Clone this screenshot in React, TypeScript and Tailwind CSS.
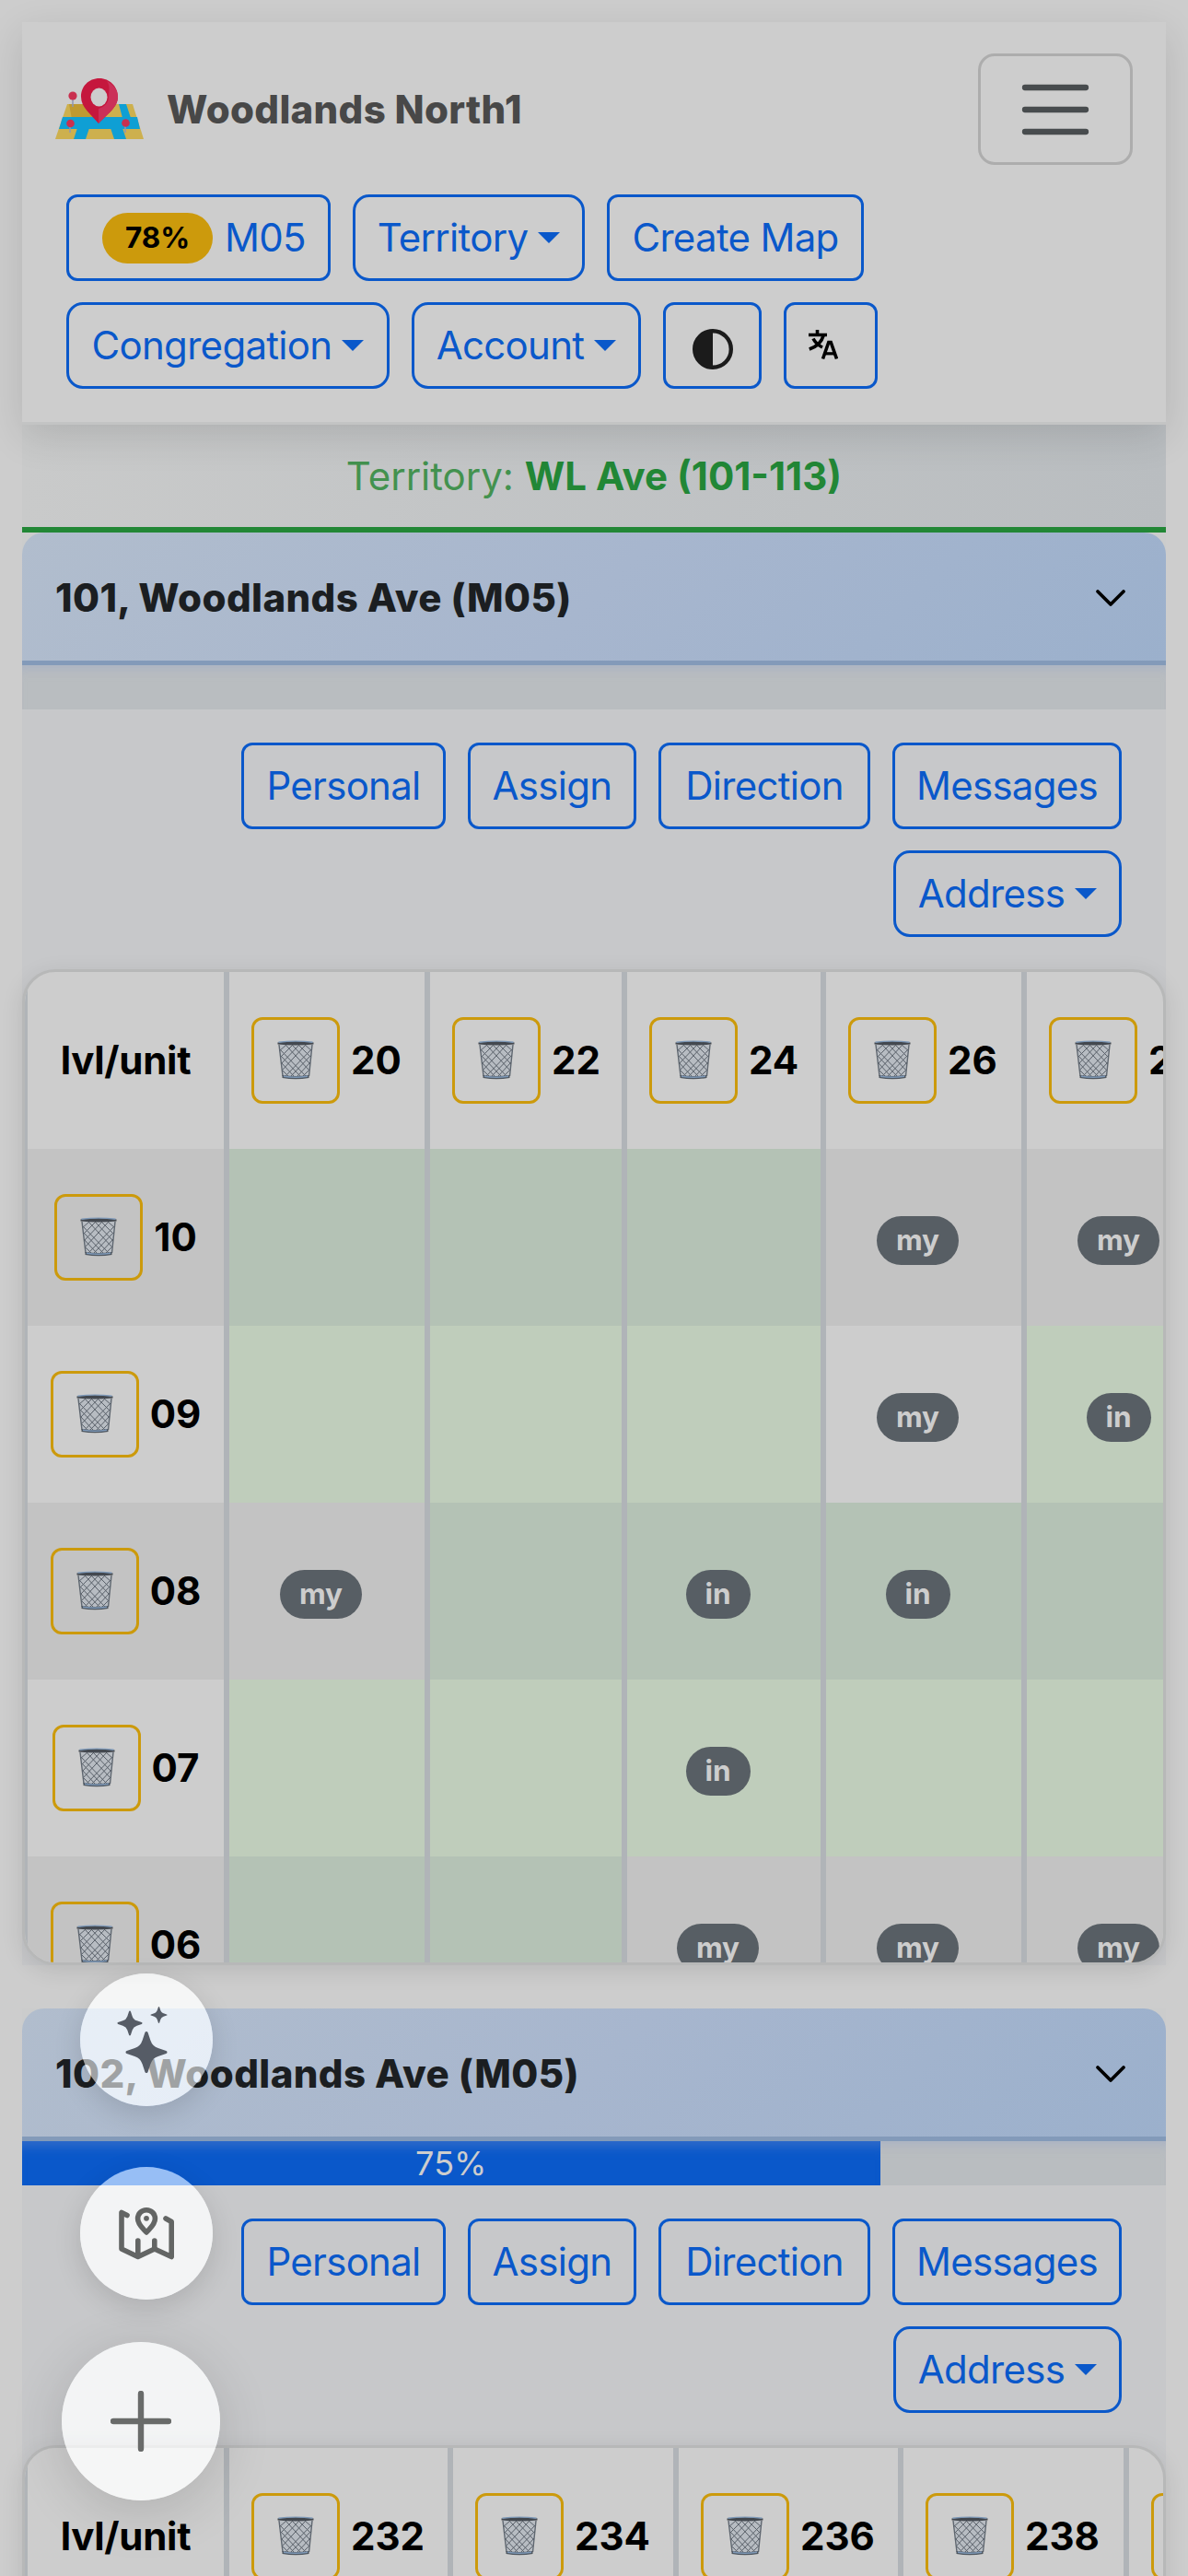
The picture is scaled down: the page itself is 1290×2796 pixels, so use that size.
import type { ReactNode } from 'react';
import { BsStars } from 'react-icons/bs';
import clsx from 'clsx';

interface Floor {
  level: string;
  units: string[];
}

interface Column {
  unit: string;
  width: string;
}

interface AddressMap {
  name: string;
  progress: number;
  columns: Column[];
  floors: Floor[];
}

// 'done' is a completed unit, a trailing + is a badge on a completed unit
const maps: AddressMap[] = [
  {
    name: '101, Woodlands Ave (M05)',
    progress: 0,
    columns: [
      { unit: '20', width: 'w-[218px]' },
      { unit: '22', width: 'w-[214px]' },
      { unit: '24', width: 'w-[216px]' },
      { unit: '26', width: 'w-[218px]' },
      { unit: '28', width: 'w-[218px]' },
    ],
    floors: [
      { level: '10', units: ['done', 'done', 'done', 'my', 'my'] },
      { level: '09', units: ['done', 'done', 'done', 'my', 'in+'] },
      { level: '08', units: ['my', 'done', 'in+', 'in+', 'done'] },
      { level: '07', units: ['done', 'done', 'in+', 'done', 'done'] },
      { level: '06', units: ['done', 'done', 'my', 'my', 'my'] },
    ],
  },
  {
    name: '102, Woodlands Ave (M05)',
    progress: 75,
    columns: [
      { unit: '232', width: 'w-[243px]' },
      { unit: '234', width: 'w-[245px]' },
      { unit: '236', width: 'w-[244px]' },
      { unit: '238', width: 'w-[245px]' },
      { unit: '240', width: 'w-[244px]' },
    ],
    floors: [],
  },
];

function Caret() {
  return (
    <span className="mt-[1px] ml-[11px] inline-block border-x-[12.6px] border-t-[12.6px] border-x-transparent border-t-[#0a58ca]" />
  );
}

interface OutlineButtonProps {
  children: ReactNode;
  width: string;
  dropdown?: boolean;
}

function OutlineButton({ children, width, dropdown = false }: OutlineButtonProps) {
  return (
    <button
      type="button"
      className={clsx(
        'flex h-[94px] shrink-0 items-center justify-center border-[3px] border-[#0a58ca] pb-[2px] text-[42px] leading-[63px] tracking-[-0.7px] whitespace-nowrap text-[#0a58ca]',
        dropdown ? 'rounded-[18px]' : 'rounded-[12px]',
        width
      )}
    >
      {children}
      {dropdown && <Caret />}
    </button>
  );
}

function LogoIcon() {
  return (
    <svg viewBox="0 0 96 68" className="h-[68px] w-[96px]">
      <path d="M13 28H84L96 66H0Z" fill="#cdb04e" />
      <path d="M15 28H46L49 44H18Z" fill="#bf9a32" />
      <path d="M8 42H89L92 55H4Z" fill="#0f9fd4" />
      <path d="M69 28H77L82 43H73Z" fill="#0f9fd4" />
      <path d="M24 54H37L33 66H20Z" fill="#0f9fd4" />
      <path d="M60 54H73L77 66H64Z" fill="#0f9fd4" />
      <path d="M19 20V31M16 50V59M76 50V59" stroke="#8f96b4" strokeWidth="1.5" />
      <circle cx="19" cy="19" r="4.6" fill="#c9304f" />
      <circle cx="16.5" cy="49" r="4.3" fill="#c9304f" />
      <circle cx="76.5" cy="48.5" r="4.3" fill="#c9304f" />
      <path d="M48 0C36 0 28 9 28 20C28 32 39 39 47 49C56 39 68 32 68 20C68 9 59 0 48 0Z" fill="#c5173d" />
      <path d="M56 3C63 7 68 12 68 20C68 32 56 39 47 49V33C54 31 58 26 58 20C58 14 60 8 56 3Z" fill="#cb3058" />
      <ellipse cx="47.5" cy="20.5" rx="9" ry="10" fill="#cdcdcd" />
    </svg>
  );
}

function WastebasketIcon() {
  return (
    <svg viewBox="0 0 40 43" className="h-[43px] w-[40px]" fill="none">
      <path d="M2 5H38L34.5 39H6Z" fill="#b7bcc2" />
      <path
        d="M2 9L31 39M9 5L35 33M16 5L36 26M23 5L37 19M30 5L38 12M3 16L25 39M4 24L18 39M5 32L12 39M38 9L9 39M31 5L5 33M24 5L4 26M17 5L3 19M10 5L2 12M37 16L15 39M36 24L22 39M35 32L28 39"
        stroke="#596069"
        strokeWidth="1"
      />
      <path d="M2 5L6 39M38 5L34.5 39" stroke="#5f6770" strokeWidth="1.4" />
      <path d="M0.5 2.5Q20 -0.5 39.5 2.5V4.5Q20 6.5 0.5 4.500Z" fill="#43484f" />
      <path d="M1.5 2.3Q20 0 38.5 2.3" stroke="#7e99b8" strokeWidth="1.4" />
      <path d="M5.5 38Q20 40 34.5 38V41Q20 43.5 5.5 41Z" fill="#4e565f" />
      <path d="M7 39.3Q20 41 33 39.3" stroke="#7e99b8" strokeWidth="1.5" />
    </svg>
  );
}

function ContrastIcon() {
  return (
    <svg viewBox="0 0 44 44" className="mt-[9px] h-[44px] w-[44px]">
      <circle cx="22" cy="22" r="19.8" fill="none" stroke="#1b1b1b" strokeWidth="4.4" />
      <path d="M22 1A21 21 0 0 0 22 43Z" fill="#1b1b1b" />
    </svg>
  );
}

function TranslateIcon() {
  return (
    <svg viewBox="12 10 33 34" className="mr-[17px] h-[34px] w-[33px]" fill="none" stroke="#000">
      <path d="M13 16.500H33M22.500 11V16.500" strokeWidth="3.600" />
      <path d="M29 17.500C27.500 23 22.500 29 13.800 32" strokeWidth="3.600" />
      <path d="M18 20.500C20 24.500 23 27.500 28 30" strokeWidth="3.600" />
      <path d="M28.500 42.500L34.800 24.500H37.200L43.500 42.500" strokeWidth="3.600" />
      <path d="M31 36.800H41" strokeWidth="3.200" />
    </svg>
  );
}

function MapIcon() {
  return (
    <svg viewBox="18 22 62 60" className="h-[60px] w-[62px]" fill="none" stroke="#636564" strokeLinecap="round" strokeLinejoin="round" strokeWidth="5.6">
      <path d="M28 32.5L22 29.5V69L39.8 77.5L57.8 69L76.2 77.5V39.5L70 36" />
      <path d="M39.8 60V76M57.8 60V68" />
      <path d="M49 26.8C43.5 26.8 39.6 31 39.6 36.3C39.6 42.5 45 46.5 49 51C53 46.5 58.4 42.5 58.4 36.3C58.4 31 54.5 26.8 49 26.8Z" />
      <circle cx="49" cy="35.8" r="2.9" fill="#636564" stroke="none" />
    </svg>
  );
}

function DeleteButton() {
  return (
    <button type="button" className="flex h-[94px] w-[96px] shrink-0 items-center justify-center rounded-[12px] border-[3px] border-[#cc9a0c] pb-[2px]">
      <WastebasketIcon />
    </button>
  );
}

function HouseholdBadge({ label }: { label: string }) {
  return (
    <span
      className={clsx(
        'mt-[7px] mr-[13px] flex h-[53px] items-center justify-center rounded-full bg-[#575e64] pb-[2px] text-[31.5px] font-bold text-[#cdcdcd]',
        label === 'my' ? 'w-[89px]' : 'w-[70px]'
      )}
    >
      {label}
    </span>
  );
}

function Navbar() {
  return (
    <header className="relative z-10 h-[437px] border-b-[3px] border-[#c3c4c4] bg-[#cdcdcd] px-9 pt-[34px] shadow-[0_12px_40px_rgba(0,0,0,0.12)]">
      <div className="flex items-center justify-between">
        <div className="flex items-center">
          <LogoIcon />
          <span className="ml-[25px] text-[42px] font-extrabold tracking-[0.3px] text-[#484848]">Woodlands North1</span>
        </div>
        <button type="button" className="flex h-[121px] w-[168px] items-center justify-center rounded-[18px] border-[3px] border-[#adadad]">
          <svg viewBox="0 0 30 30" className="h-[90px] w-[90px]">
            <path d="M4 7h22M4 15h22M4 23h22" stroke="#484c4e" strokeWidth="2.1" strokeLinecap="round" />
          </svg>
        </button>
      </div>
      <div className="mt-8 flex flex-col gap-[23px] pl-3">
        <div className="flex gap-6">
          <OutlineButton width="w-[287px]">
            <span className="mt-[3px] mr-[13px] ml-[12px] flex h-[55px] w-[120px] items-center justify-center rounded-full bg-[#cc9a0c] pb-[2px] text-[31.5px] font-bold tracking-normal text-black">
              78%
            </span>
            M05
          </OutlineButton>
          <OutlineButton width="w-[252px]" dropdown>Territory</OutlineButton>
          <OutlineButton width="w-[279px]">Create Map</OutlineButton>
        </div>
        <div className="flex gap-6">
          <OutlineButton width="w-[351px]" dropdown>Congregation</OutlineButton>
          <OutlineButton width="w-[249px]" dropdown>Account</OutlineButton>
          <OutlineButton width="w-[107px]">
            <ContrastIcon />
          </OutlineButton>
          <OutlineButton width="w-[102px]">
            <TranslateIcon />
          </OutlineButton>
        </div>
      </div>
    </header>
  );
}

function AddressTable({ map }: { map: AddressMap }) {
  return (
    <div className="h-[1081px] shrink-0 overflow-hidden rounded-[36px] border-[3px] border-[#b7b8b8] bg-[#cdcdcd] text-[42px] font-bold text-black shadow-[0_6px_24px_rgba(0,0,0,0.1)]">
      <div className="flex h-[192px] w-max">
        <div className="flex w-[219px] items-center justify-center border-x-[3px] border-[#b0b4b8] pb-[2px] tracking-[-0.3px]">lvl/unit</div>
        {map.columns.map((column) => (
          <div key={column.unit} className={clsx('flex items-center border-x-[3px] border-[#b0b4b8] pl-6', column.width)}>
            <DeleteButton />
            <span className="ml-[12px] pb-[2px]">{column.unit}</span>
          </div>
        ))}
      </div>
      {map.floors.map((floor, index) => (
        <div key={floor.level} className={clsx('flex h-[192px] w-max', index % 2 === 0 ? 'bg-[#c3c3c3]' : 'bg-[#cdcdcd]')}>
          <div className="flex w-[219px] items-center justify-center border-x-[3px] border-[#b0b4b8]">
            <DeleteButton />
            <span className="ml-[12px] pb-[2px]">{floor.level}</span>
          </div>
          {floor.units.map((unit, unitIndex) => {
            const done = unit === 'done' || unit.endsWith('+');
            return (
              <div
                key={map.columns[unitIndex].unit}
                className={clsx(
                  'flex items-center justify-center border-x-[3px] border-[#b0b4b8]',
                  map.columns[unitIndex].width,
                  done && (index % 2 === 0 ? 'bg-[#b4c2b5]' : 'bg-[#bfcdbb]')
                )}
              >
                {unit !== 'done' && <HouseholdBadge label={unit.replace('+', '')} />}
              </div>
            );
          })}
        </div>
      ))}
    </div>
  );
}

function AddressSection({ map }: { map: AddressMap }) {
  return (
    <section className="bg-[#c7c8ca]">
      <div className="bg-[#cbcccc]">
        <div className="flex h-[144px] items-center justify-between rounded-t-[24px] border-b-[5px] border-[#839ab9] bg-linear-135 from-[#b1bdcd] via-[#a7b6ce] to-[#9bb0cc] pr-[43px] pl-9">
          <span className="mt-[2px] text-[42px] font-extrabold tracking-[0.4px] text-[#1b1e21]">{map.name}</span>
          <svg viewBox="0 0 34 20" className="mt-[3px] h-[20px] w-[34px]">
            <path d="M3 3L17 17L31 3" fill="none" stroke="#000" strokeWidth="3.8" strokeLinecap="round" strokeLinejoin="round" />
          </svg>
        </div>
      </div>
      <div className="h-[48px] bg-[#b9bdc0] shadow-[inset_0_12px_12px_-8px_rgba(160,172,198,0.6)]">
        {map.progress > 0 && (
          <div
            className="flex h-full items-center justify-center bg-[#0a58ca] text-[36px] text-[#cdcdcd] shadow-[inset_0_14px_12px_-8px_rgba(75,120,200,0.6)]"
            style={{ width: `${map.progress}%` }}
          >
            {map.progress}%
          </div>
        )}
      </div>
      <div className="flex flex-wrap justify-end gap-x-6 gap-y-[23px] px-12 pt-9 pb-[35px]">
        <OutlineButton width="w-[222px]">Personal</OutlineButton>
        <OutlineButton width="w-[183px]">Assign</OutlineButton>
        <OutlineButton width="w-[230px]">Direction</OutlineButton>
        <OutlineButton width="w-[249px]">Messages</OutlineButton>
        <OutlineButton width="w-[248px]" dropdown>Address</OutlineButton>
      </div>
      <AddressTable map={map} />
    </section>
  );
}

function FloatingMenu() {
  return (
    <div className="absolute top-[2142px] left-[67px] z-20 flex w-[172px] flex-col items-center">
      <button type="button" className="ml-[12px] flex h-[144px] w-[144px] items-center justify-center rounded-full bg-[#f5f6f6]/60 shadow-[0_9px_30px_rgba(0,0,0,0.13)] backdrop-brightness-[1.2]">
        <BsStars className="h-[72px] w-[72px] text-[#565c66]" />
      </button>
      <button type="button" className="mt-[66px] ml-[12px] flex h-[144px] w-[144px] items-center justify-center rounded-full bg-[#f5f6f6]/60 shadow-[0_9px_30px_rgba(0,0,0,0.13)] backdrop-brightness-[1.2]">
        <MapIcon />
      </button>
      <button type="button" className="mt-[46px] flex h-[172px] w-[172px] items-center justify-center rounded-full bg-[#f5f6f6]/60 shadow-[0_12px_60px_rgba(0,0,0,0.14)] backdrop-brightness-[1.2]">
        <svg viewBox="0 0 66 66" className="h-[66px] w-[66px]">
          <path d="M33 3V63M3 33H63" stroke="#696b6a" strokeWidth="6.4" strokeLinecap="round" />
        </svg>
      </button>
    </div>
  );
}

export default function App() {
  return (
    <div className="relative h-[2796px] w-[1290px] overflow-hidden bg-[#cdcdcd] p-6 font-['Inter','Liberation_Sans',sans-serif]">
      <Navbar />
      <div className="flex h-[117px] items-center justify-center border-b-[6px] border-[#228736] bg-linear-to-r from-[#c9caca] to-[#b9bdc0] text-[42px] whitespace-pre text-[#43924f]">
        Territory: <span className="font-bold text-[#228736]">WL Ave (101-113)</span>
      </div>
      <div className="flex flex-col gap-[47px]">
        {maps.map((map) => (
          <AddressSection key={map.name} map={map} />
        ))}
      </div>
      <FloatingMenu />
    </div>
  );
}
